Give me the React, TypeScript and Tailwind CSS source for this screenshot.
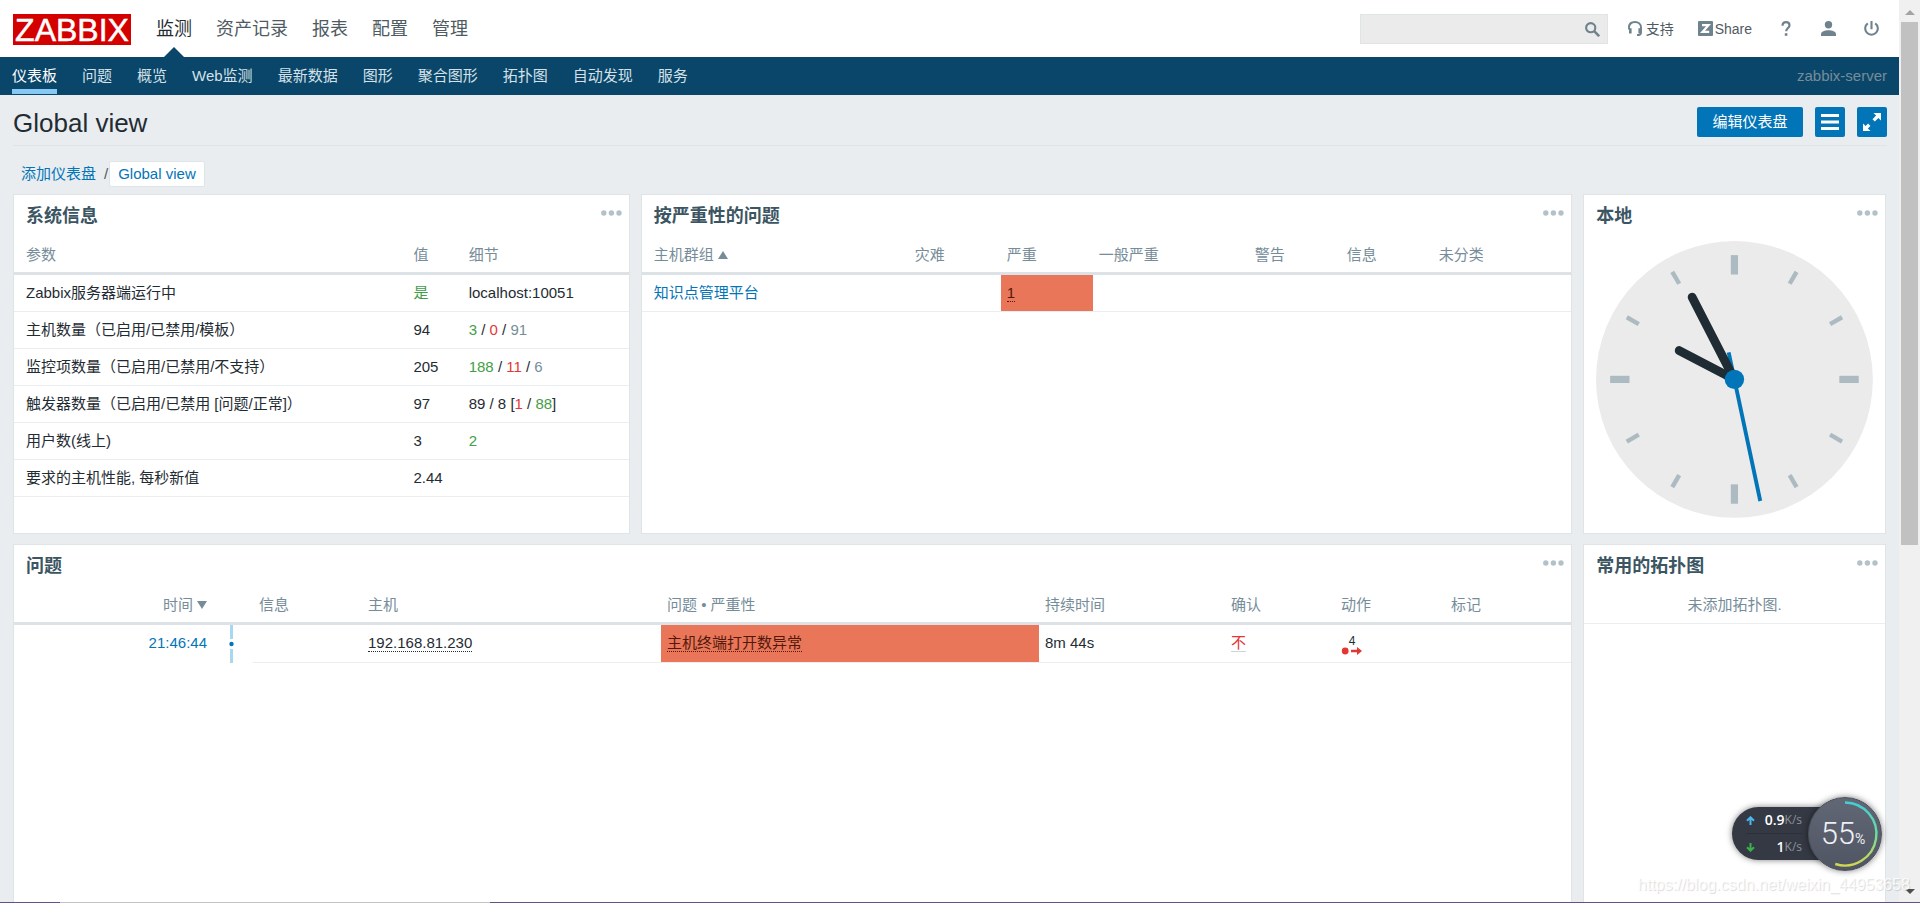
import React from "react";

const mainMenu = ["监测", "资产记录", "报表", "配置", "管理"];
const subMenu = ["仪表板", "问题", "概览", "Web监测", "最新数据", "图形", "聚合图形", "拓扑图", "自动发现", "服务"];

const th = "h-10 pt-0.5 px-1.5 font-normal text-left text-[#768d99] whitespace-nowrap border-b-3 border-[#dce2e6]";
const td = "px-1.5 border-b border-[#ebeef0] whitespace-nowrap";

function Dots() {
  return (
    <button type="button" aria-label="更多" className="flex h-4 items-center text-[#b3c1c9]">
      <svg width="21" height="6" viewBox="0 0 21 6" fill="currentColor">
        <circle cx="2.8" cy="3" r="2.7" />
        <circle cx="10.4" cy="3" r="2.7" />
        <circle cx="18" cy="3" r="2.7" />
      </svg>
    </button>
  );
}

function Widget({ title, children }: { title: string; children?: React.ReactNode }) {
  return (
    <section className="min-w-0 overflow-hidden border border-[#dfe4e7] bg-white">
      <header className="flex h-10 items-start justify-between pr-[7px] pl-3 pt-2.5">
        <h4 className="text-lg leading-[22px] font-bold text-[#3c5563]">{title}</h4>
        <Dots />
      </header>
      {children}
    </section>
  );
}

function SystemInfo() {
  const g = "text-[#429e47]";
  const r = "text-[#e33734]";
  const n = "text-[#768d99]";
  const rows: [string, React.ReactNode, React.ReactNode][] = [
    ["Zabbix服务器端运行中", <span className={g}>是</span>, "localhost:10051"],
    ["主机数量（已启用/已禁用/模板）", "94", <><span className={g}>3</span> / <span className={r}>0</span> / <span className={n}>91</span></>],
    ["监控项数量（已启用/已禁用/不支持）", "205", <><span className={g}>188</span> / <span className={r}>11</span> / <span className={n}>6</span></>],
    ["触发器数量（已启用/已禁用 [问题/正常]）", "97", <>89 / 8 [<span className={r}>1</span> / <span className={g}>88</span>]</>],
    ["用户数(线上)", "3", <span className={g}>2</span>],
    ["要求的主机性能, 每秒新值", "2.44", ""],
  ];
  return (
    <table className="w-full table-fixed border-separate border-spacing-0">
      <colgroup>
        <col className="w-[64%]" />
        <col className="w-[9%]" />
        <col />
      </colgroup>
      <thead>
        <tr>
          <th className={`${th} pl-3`}>参数</th>
          <th className={th}>值</th>
          <th className={th}>细节</th>
        </tr>
      </thead>
      <tbody>
        {rows.map(([name, value, details]) => (
          <tr key={name} className="h-[37px]">
            <td className={`${td} pl-3`}>{name}</td>
            <td className={td}>{value}</td>
            <td className={td}>{details}</td>
          </tr>
        ))}
      </tbody>
    </table>
  );
}

function SeverityTable() {
  return (
    <table className="w-full table-fixed border-separate border-spacing-0">
      <colgroup>
        <col className="w-[267px]" />
        <col className="w-[92px]" />
        <col className="w-[92px]" />
        <col className="w-[156px]" />
        <col className="w-[92px]" />
        <col className="w-[92px]" />
        <col />
      </colgroup>
      <thead>
        <tr>
          <th className={`${th} pl-3`}>
            <a href="#group" className="inline-flex items-center gap-1">
              主机群组
              <svg width="10" height="8" viewBox="0 0 10 8" fill="currentColor"><path d="M5 0l5 8H0z" /></svg>
            </a>
          </th>
          {["灾难", "严重", "一般严重", "警告", "信息", "未分类"].map((s) => (
            <th key={s} className={th}>{s}</th>
          ))}
        </tr>
      </thead>
      <tbody>
        <tr className="h-[37px]">
          <td className={`${td} pl-3`}><a href="#km" className="text-[#0275b8]">知识点管理平台</a></td>
          <td className={td} />
          <td className={`${td} bg-[#e97659]`}>
            <a href="#high" className="border-b border-dotted border-[#52190b] text-[#52190b]">1</a>
          </td>
          <td className={td} />
          <td className={td} />
          <td className={td} />
          <td className={td} />
        </tr>
      </tbody>
    </table>
  );
}

function Clock() {
  const major = [0, 90, 180, 270];
  const minor = [30, 60, 120, 150, 210, 240, 300, 330];
  return (
    <div className="px-3 pt-1.5">
      <svg viewBox="0 0 100 100" className="block w-full" role="img" aria-label="本地">
        <circle cx="50" cy="50" r="50" fill="#ebebeb" />
        <g fill="#acbbc2">
          {major.map((a) => <rect key={a} x="48.7" y="5.1" width="2.6" height="7" transform={`rotate(${a} 50 50)`} />)}
          {minor.map((a) => <rect key={a} x="49.2" y="5.1" width="1.6" height="5" transform={`rotate(${a} 50 50)`} />)}
        </g>
        <path d="M50 60V5.1" stroke="#0275b8" strokeWidth="1.4" transform="rotate(168 50 50)" />
        <path d="M50 50V27.5" stroke="#1f2c33" strokeWidth="3.2" strokeLinecap="round" transform="rotate(297.6 50 50)" />
        <path d="M50 50V16.6" stroke="#1f2c33" strokeWidth="3.2" strokeLinecap="round" transform="rotate(332.8 50 50)" />
        <circle cx="50" cy="50" r="3.5" fill="#0275b8" />
      </svg>
    </div>
  );
}

function Problems() {
  return (
    <table className="w-full table-fixed border-separate border-spacing-0">
      <colgroup>
        <col className="w-[199px]" />
        <col className="w-[40px]" />
        <col className="w-[109px]" />
        <col className="w-[299px]" />
        <col className="w-[378px]" />
        <col className="w-[186px]" />
        <col className="w-[110px]" />
        <col className="w-[110px]" />
        <col />
      </colgroup>
      <thead>
        <tr>
          <th className={`${th} text-right`}>
            <a href="#time" className="inline-flex items-center gap-1">
              时间
              <svg width="10" height="8" viewBox="0 0 10 8" fill="currentColor"><path d="M5 8l5-8H0z" /></svg>
            </a>
          </th>
          <th className={th} />
          {["信息", "主机", "问题 • 严重性", "持续时间", "确认", "动作", "标记"].map((s) => (
            <th key={s} className={th}>{s}</th>
          ))}
        </tr>
      </thead>
      <tbody>
        <tr className="h-[38px]">
          <td className="px-1.5 pb-0.5 text-right"><a href="#event" className="text-[#0275b8]">21:46:44</a></td>
          <td className="p-0">
            <svg width="40" height="38" viewBox="0 0 40 38" className="block">
              <path d="M18.5 0v14M18.5 24v14" stroke="#a8d8f0" strokeWidth="3" />
              <circle cx="18.5" cy="19" r="2.2" fill="#0275b8" />
            </svg>
          </td>
          <td className={td} />
          <td className={`${td} pb-0.5`}><a href="#host" className="border-b border-dotted border-[#1f2c33]">192.168.81.230</a></td>
          <td className={`${td} bg-[#e97659] pb-0.5`}>
            <a href="#problem" className="border-b border-dotted border-[#52190b] text-[#52190b]">主机终端打开数异常</a>
          </td>
          <td className={`${td} pb-0.5`}>8m 44s</td>
          <td className={`${td} pb-0.5`}><a href="#ack" className="border-b border-[#ccd5d9] text-[#e33734]">不</a></td>
          <td className={td}>
            <button type="button" aria-label="动作 4" className="flex w-[22px] flex-col items-center pt-0.5">
              <span className="text-xs leading-3">4</span>
              <svg width="22" height="8" viewBox="0 0 22 8" fill="#e33734" className="block">
                <circle cx="4.2" cy="4" r="3.4" />
                <path d="M10 2.800h6V0l5 4-5 4V5.200h-6z" />
              </svg>
            </button>
          </td>
          <td className={td} />
        </tr>
      </tbody>
    </table>
  );
}

function TopBar() {
  return (
    <div className="flex h-[57px] items-start bg-white pr-3 pl-[13px]">
      <a href="#home" className="mt-3.5 flex h-[31px] w-[118px] items-center justify-center bg-[#d40000] text-[32px] leading-none text-white [-webkit-text-stroke:0.5px_white]">ZABBIX</a>
      <nav className="ml-[13px] flex">
        {mainMenu.map((m, i) => (
          <a key={m} href="#menu" className={i === 0 ? "relative h-[57px] px-3 pt-[15px] text-lg text-[#1f2c33]" : "h-[57px] px-3 pt-[15px] text-lg text-[#4f5b62]"}>
            {m}
            {i === 0 && (
              <svg className="absolute bottom-0 left-5" width="20" height="10" viewBox="0 0 20 10"><path d="M10 0l10 10H0z" fill="#0a466a" /></svg>
            )}
          </a>
        ))}
      </nav>
      <div className="ml-auto flex pt-3.5 text-sm text-[#4f5b62]">
        <form className="flex h-[30px] w-[248px] items-center border border-[#dfe4e7] bg-[#ebebeb] pr-[7px]" onSubmit={(e) => e.preventDefault()}>
          <input type="text" aria-label="搜索" className="h-full min-w-0 flex-1 bg-transparent px-1.5 outline-none" />
          <button type="submit" aria-label="搜索" className="text-[#6f838e]">
            <svg width="15" height="15" viewBox="0 0 15 15" fill="none" stroke="currentColor">
              <circle cx="5.700" cy="5.700" r="4.600" strokeWidth="2.100" />
              <path d="M9.200 9.200l5 5" strokeWidth="2.600" />
            </svg>
          </button>
        </form>
        <div className="ml-5 flex h-[29px] items-center">
          <a href="#support" className="flex items-center gap-1">
            <svg width="14" height="15" viewBox="0 0 14 15" fill="none" stroke="#6f838e">
              <path d="M1 8.500V6.500C1 3 3.500 1 7 1s6 2 6 5.500v5c0 1.600-1 2.500-2.500 2.500H9" strokeWidth="1.9" />
              <path d="M2.300 7.200v5.300M11.700 7.200v5.300" strokeWidth="2.6" />
            </svg>
            支持
          </a>
          <a href="#share" className="ml-6 flex items-center gap-0.5">
            <svg width="15" height="15" viewBox="0 0 15 15">
              <rect width="15" height="15" rx="1" fill="#6f838e" />
              <path d="M4 4.200h6.500L4.500 10.900H11.200" fill="none" stroke="#fff" strokeWidth="2.200" />
            </svg>
            Share
          </a>
          <a href="#help" aria-label="帮助" className="ml-7 w-3 text-[#6f838e]">
            <svg width="10" height="15" viewBox="0 0 10 15" fill="none" stroke="currentColor" className="mx-auto">
              <path d="M1.500 4.800C1.500 2.300 3 1.100 5 1.100s3.500 1.200 3.500 3.300c0 2.600-3.300 2.800-3.300 5.900" strokeWidth="2.200" />
              <path d="M5.100 12.200v2.600" strokeWidth="2.600" />
            </svg>
          </a>
          <a href="#profile" aria-label="用户" className="ml-[29px] text-[#6f838e]">
            <svg width="15" height="15" viewBox="0 0 15 15" fill="currentColor">
              <circle cx="7.500" cy="3.700" r="3.700" />
              <path d="M0 15v-1.800C0 10.400 4 9.300 7.500 9.300s7.500 1.100 7.500 3.900V15z" />
            </svg>
          </a>
          <a href="#logout" aria-label="退出" className="mr-2 ml-7 text-[#6f838e]">
            <svg width="15" height="15" viewBox="0 0 15 15" fill="none" stroke="currentColor" strokeWidth="2.100">
              <path d="M7.500 0v8.200M3.800 2.300a6.300 6.300 0 1 0 7.400 0" />
            </svg>
          </a>
        </div>
      </div>
    </div>
  );
}

function SubBar() {
  return (
    <nav className="flex h-[38px] items-start gap-[25px] bg-[#0a466a] px-3 text-[#d5e1e8]">
      {subMenu.map((m, i) => (
        <a key={m} href="#sub" className={i === 0 ? "box-content h-8 border-b-5 border-[#86c9f4] leading-[38px] text-white" : "leading-[38px]"}>{m}</a>
      ))}
      <span className="ml-auto leading-[38px] text-[#768d99]">zabbix-server</span>
    </nav>
  );
}

function NetMonitor() {
  return (
    <div className="absolute right-[38px] bottom-8 flex h-[75px] items-center">
      <div className="-mr-9 flex h-[53px] w-[112px] flex-col rounded-l-full bg-[#343944] pr-[42px] pl-3.5 font-[Open_Sans,sans-serif] text-sm text-white shadow-[0_0_6px_rgba(0,0,0,0.5)]">
        <div className="flex flex-1 items-center border-b border-[#2b303a]">
          <svg width="9" height="9" viewBox="0 0 9 9" fill="none" stroke="#4db8f0" strokeWidth="2"><path d="M4.500 9V1M1 4.700L4.500 1.300 8 4.700" /></svg>
          <span className="ml-auto font-semibold">0.9</span><span className="text-xs text-[#8c919b]">K/s</span>
        </div>
        <div className="flex flex-1 items-center">
          <svg width="9" height="9" viewBox="0 0 9 9" fill="none" stroke="#36b34a" strokeWidth="2"><path d="M4.500 0v8M1 4.300l3.500 3.400L8 4.300" /></svg>
          <span className="ml-auto font-semibold">1</span><span className="text-xs text-[#8c919b]">K/s</span>
        </div>
      </div>
      <div className="relative flex size-[74px] items-center justify-center rounded-full border border-[#4a4f5c] bg-linear-to-b from-[#626775] to-[#505563] pr-1 text-[#eef0f4] shadow-[0_0_6px_rgba(0,0,0,0.5)]">
        <svg className="absolute inset-0" width="72" height="72" viewBox="0 0 72 72" fill="none">
          <defs>
            <linearGradient id="arc" x1="0" y1="0" x2="0" y2="1">
              <stop offset="0" stopColor="#42cfd6" />
              <stop offset="0.5" stopColor="#6fdc9c" />
              <stop offset="1" stopColor="#d3d750" />
            </linearGradient>
          </defs>
          <path d="M36 4.500A31.500 31.500 0 1 1 26.300 66" stroke="url(#arc)" strokeWidth="2.400" />
        </svg>
        <div className="flex items-baseline font-[Roboto,sans-serif]">
          <span className="text-[31px] leading-none font-light">55</span>
          <span className="text-sm leading-none">%</span>
        </div>
      </div>
    </div>
  );
}

export default function App() {
  return (
    <div className="relative flex h-screen flex-col overflow-hidden bg-[#e9edf0] font-['Liberation_Sans','Noto_Sans_CJK_SC',sans-serif] text-[15px] leading-5 text-[#1f2c33]">
      <div className="flex min-h-0 flex-1">
        <div className="flex min-w-0 flex-1 flex-col">
          <TopBar />
          <SubBar />
          <main className="flex min-h-0 flex-1 flex-col px-[13px]">
            <div className="-mr-px flex h-[51px] shrink-0 items-center gap-3 border-b border-[#dfe4e7] pt-1">
              <h1 className="mt-0.5 text-[26px] leading-8">Global view</h1>
              <button type="button" className="ml-auto h-[30px] w-[106px] rounded-xs bg-[#0275b8] text-[15px] text-white">编辑仪表盘</button>
              <button type="button" aria-label="菜单" className="flex size-[30px] items-center justify-center rounded-xs bg-[#0275b8]">
                <svg width="18" height="16" viewBox="0 0 18 16" stroke="#fff" strokeWidth="2.800"><path d="M0 1.500h18M0 8h18M0 14.500h18" /></svg>
              </button>
              <button type="button" aria-label="全屏" className="flex size-[30px] items-center justify-center rounded-xs bg-[#0275b8]">
                <svg width="18" height="18" viewBox="0 0 18 18" fill="#fff">
                  <path d="M10.500 0H18v7.500l-2.600-2.600-3.600 3.600-2.300-2.300 3.600-3.600zM7.500 18H0v-7.500l2.600 2.600 2.500-2.500 2.300 2.300-2.500 2.500z" />
                </svg>
              </button>
            </div>
            <nav className="mt-3.5 flex h-7 shrink-0 items-center pl-2 text-[#0275b8]">
              <a href="#dashboards">添加仪表盘</a>
              <span className="ml-2 text-[#4f5b62]">/</span>
              <a href="#global" className="ml-px rounded-xs border border-[#dfe4e7] bg-white px-2 leading-6">Global view</a>
            </nav>
            <div className="mt-1.5 grid min-h-0 flex-1 grid-cols-[617fr_932fr_303fr] grid-rows-[340px_400px] gap-x-[11px] gap-y-2.5">
              <Widget title="系统信息"><SystemInfo /></Widget>
              <Widget title="按严重性的问题"><SeverityTable /></Widget>
              <Widget title="本地"><Clock /></Widget>
              <div className="col-span-2 grid">
                <Widget title="问题"><Problems /></Widget>
              </div>
              <Widget title="常用的拓扑图">
                <p className="flex h-[39px] items-center justify-center border-b border-[#ebeef0] pt-0.5 text-[#768d99]">未添加拓扑图.</p>
              </Widget>
            </div>
          </main>
        </div>
        <div className="flex w-[21px] flex-col items-center justify-between bg-[#f0f0f0] pt-2.5 pb-2">
          <svg width="10" height="5" viewBox="0 0 10 5"><path d="M5 0l5 5H0z" fill="#a3a3a3" /></svg>
          <div className="mt-[7px] h-[523px] w-[17px] bg-[#c1c1c1]" />
          <svg className="mt-auto" width="10" height="5" viewBox="0 0 10 5"><path d="M5 5l5-5H0z" fill="#505050" /></svg>
        </div>
      </div>
      <div className="flex h-px shrink-0 bg-[#674f8b]">
        <div className="ml-[60px] w-[430px] bg-[#c3c3c3]" />
      </div>
      <NetMonitor />
      <span className="absolute right-2.5 bottom-1.5 text-base leading-6 text-white/80 [text-shadow:1px_1px_1px_rgba(0,0,0,0.15)]">https://blog.csdn.net/weixin_44953658</span>
    </div>
  );
}
